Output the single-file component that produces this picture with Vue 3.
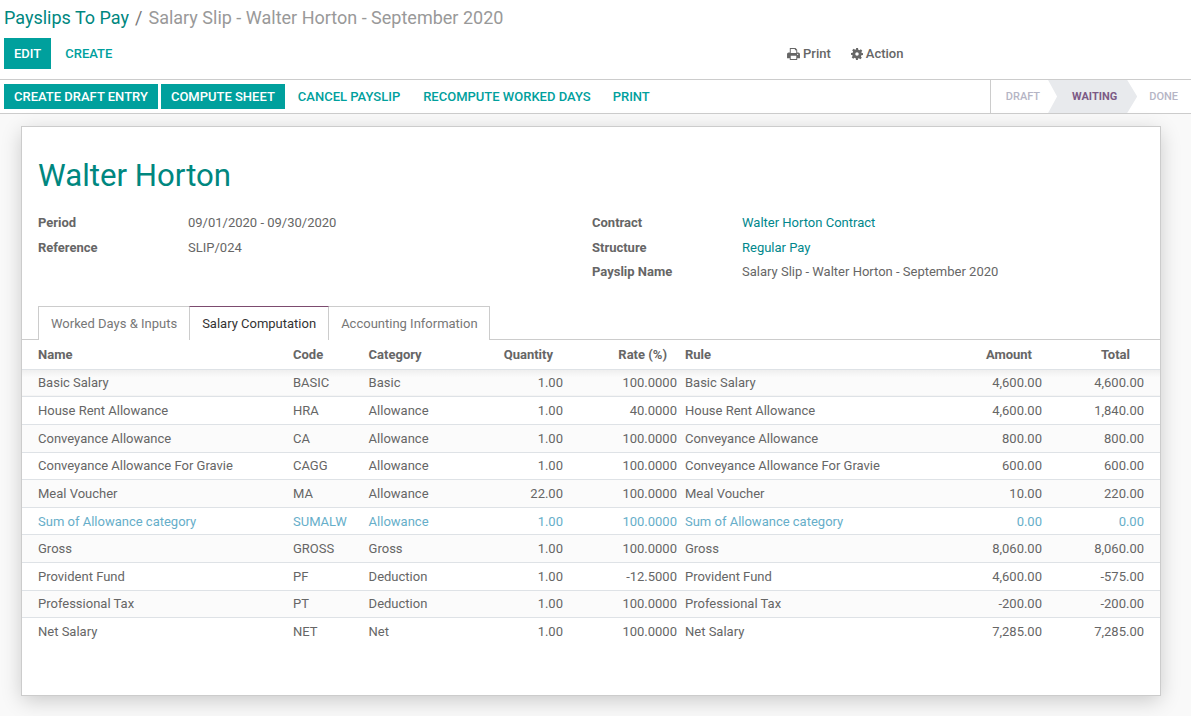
<script setup>
const rows = [
  { name: 'Basic Salary', code: 'BASIC', category: 'Basic', qty: '1.00', rate: '100.0000', amount: '4,600.00', total: '4,600.00' },
  { name: 'House Rent Allowance', code: 'HRA', category: 'Allowance', qty: '1.00', rate: '40.0000', amount: '4,600.00', total: '1,840.00' },
  { name: 'Conveyance Allowance', code: 'CA', category: 'Allowance', qty: '1.00', rate: '100.0000', amount: '800.00', total: '800.00' },
  { name: 'Conveyance Allowance For Gravie', code: 'CAGG', category: 'Allowance', qty: '1.00', rate: '100.0000', amount: '600.00', total: '600.00' },
  { name: 'Meal Voucher', code: 'MA', category: 'Allowance', qty: '22.00', rate: '100.0000', amount: '10.00', total: '220.00' },
  { name: 'Sum of Allowance category', code: 'SUMALW', category: 'Allowance', qty: '1.00', rate: '100.0000', amount: '0.00', total: '0.00', muted: true },
  { name: 'Gross', code: 'GROSS', category: 'Gross', qty: '1.00', rate: '100.0000', amount: '8,060.00', total: '8,060.00' },
  { name: 'Provident Fund', code: 'PF', category: 'Deduction', qty: '1.00', rate: '-12.5000', amount: '4,600.00', total: '-575.00' },
  { name: 'Professional Tax', code: 'PT', category: 'Deduction', qty: '1.00', rate: '100.0000', amount: '-200.00', total: '-200.00' },
  { name: 'Net Salary', code: 'NET', category: 'Net', qty: '1.00', rate: '100.0000', amount: '7,285.00', total: '7,285.00' }
]
</script>

<template>
  <div class="page">
    <header class="panel">
      <div class="crumbs">
        <a class="crumb-link">Payslips To Pay</a>
        <span class="slash">/</span>
        <span class="crumb-now">Salary Slip - Walter Horton - September 2020</span>
      </div>
      <div class="panel-row">
        <div class="btns">
          <button class="btn primary edit">EDIT</button>
          <button class="btn link create">CREATE</button>
        </div>
        <div class="sidebar">
          <span class="side-item">
            <svg class="ico" viewBox="0 0 14 13" width="13" height="12">
              <path fill="#666" fill-rule="evenodd" d="M3 0h6.200L11 1.800V5h1.200c1 0 1.800.8 1.800 1.800V11h-3v2H3v-2H0V6.800C0 5.800.8 5 1.800 5H3zM4 1v4.500h6V2.500H8.500V1zM4 8.500V12h6V8.500zM11.500 6.200a.7.7 0 1 0 0 1.400.7.7 0 0 0 0-1.400z" />
            </svg>
            Print
          </span>
          <span class="side-item">
            <svg class="ico" viewBox="0 0 24 24" width="12" height="12">
              <path fill="#666" fill-rule="evenodd" d="M10 0h4l.6 3.300 2.300 1 2.800-1.900 2.900 2.900-1.900 2.800 1 2.300L24 10v4l-3.300.6-1 2.300 1.900 2.800-2.900 2.900-2.800-1.900-2.300 1L14 24h-4l-.6-3.300-2.300-1-2.800 1.900-2.900-2.900 1.900-2.800-1-2.300L0 14v-4l3.300-.6 1-2.300-1.900-2.800 2.900-2.900 2.800 1.900 2.300-1zM12 8.500a3.500 3.500 0 1 0 0 7 3.500 3.500 0 0 0 0-7z" />
            </svg>
            Action
          </span>
        </div>
      </div>
    </header>

    <div class="statusbar">
      <div class="actions">
        <button class="btn primary">CREATE DRAFT ENTRY</button>
        <button class="btn primary">COMPUTE SHEET</button>
        <button class="btn link">CANCEL PAYSLIP</button>
        <button class="btn link">RECOMPUTE WORKED DAYS</button>
        <button class="btn link last-link">PRINT</button>
      </div>
      <div class="steps">
        <span class="step first">DRAFT</span>
        <span class="step current">WAITING</span>
        <span class="step last">DONE</span>
      </div>
    </div>

    <main class="sheet">
      <h1 class="employee">Walter Horton</h1>
      <div class="info">
        <dl class="info-col">
          <div class="info-row"><dt>Period</dt><dd>09/01/2020 - 09/30/2020</dd></div>
          <div class="info-row"><dt>Reference</dt><dd>SLIP/024</dd></div>
        </dl>
        <dl class="info-col">
          <div class="info-row"><dt>Contract</dt><dd class="teal">Walter Horton Contract</dd></div>
          <div class="info-row"><dt>Structure</dt><dd class="teal">Regular Pay</dd></div>
          <div class="info-row"><dt>Payslip Name</dt><dd>Salary Slip - Walter Horton - September 2020</dd></div>
        </dl>
      </div>

      <div class="tabs">
        <span class="tab">Worked Days &amp; Inputs</span>
        <span class="tab active">Salary Computation</span>
        <span class="tab tab-last">Accounting Information</span>
      </div>

      <table class="lines">
        <thead>
          <tr>
            <th class="c-name">Name</th>
            <th class="c-code">Code</th>
            <th class="c-cat">Category</th>
            <th class="c-qty num">Quantity</th>
            <th class="c-rate num">Rate (%)</th>
            <th class="c-rule">Rule</th>
            <th class="c-amt num">Amount</th>
            <th class="c-total num">Total</th>
          </tr>
        </thead>
        <tbody>
          <tr v-for="row in rows" :key="row.code" :class="{ muted: row.muted }">
            <td class="c-name">{{ row.name }}</td>
            <td class="c-code">{{ row.code }}</td>
            <td class="c-cat">{{ row.category }}</td>
            <td class="c-qty num">{{ row.qty }}</td>
            <td class="c-rate num">{{ row.rate }}</td>
            <td class="c-rule">{{ row.name }}</td>
            <td class="c-amt num">{{ row.amount }}</td>
            <td class="c-total num">{{ row.total }}</td>
          </tr>
        </tbody>
      </table>
    </main>
  </div>
</template>

<style scoped>
.page {
  height: 716px;
  overflow: hidden;
  background: #f9f9f9;
  color: #666;
  font-family: Roboto, "Liberation Sans", sans-serif;
  font-size: 13px;
}
.panel {
  height: 79px;
  background: #fff;
  border-bottom: 1px solid #ccc;
}
.crumbs {
  display: flex;
  align-items: center;
  height: 34px;
  padding-left: 4px;
  font-size: 18px;
}
.crumb-link { color: #00877f; }
.slash { margin: 0 6px; color: #777; }
.crumb-now { color: #999; }
.panel-row { display: flex; padding-top: 4px; }
.btns { display: flex; width: 787px; }
.btn {
  border: 0;
  padding: 0 10px;
  font: 500 13px Roboto, "Liberation Sans", sans-serif;
  white-space: nowrap;
}
.primary { background: #00a09d; color: #fff; }
.link { background: transparent; color: #00a09d; }
.edit { margin-left: 4px; height: 31px; }
.create { margin-left: 4px; height: 31px; }
.sidebar { display: flex; gap: 20px; height: 31px; align-items: center; font-weight: 500; }
.side-item { display: flex; align-items: center; gap: 3px; }
.statusbar {
  display: flex;
  justify-content: space-between;
  height: 33px;
  background: #fff;
  border-bottom: 1px solid #ccc;
}
.actions { display: flex; align-items: center; padding-left: 4px; gap: 3px; }
.actions .btn { height: 25px; }
.actions .last-link { margin-left: -1px; }
.steps { display: flex; height: 33px; border-left: 1px solid #ccc; font-size: 11px; font-weight: 500; }
.step { display: flex; align-items: center; color: #b5b5c5; }
.first { padding: 0 8px 0 15px; }
.current {
  position: relative;
  z-index: 1;
  padding: 0 20px 0 24px;
  margin-right: -10px;
  background: #e8eaed;
  color: #7c5a85;
  font-weight: 700;
  clip-path: polygon(0 0, calc(100% - 10px) 0, 100% 50%, calc(100% - 10px) 100%, 0 100%, 9px 50%);
}
.last { padding: 0 13px 0 22px; }
.sheet {
  box-sizing: border-box;
  width: 1140px;
  height: 570px;
  margin: 12px 0 0 21px;
  background: #fff;
  border: 1px solid #ccc;
  box-shadow: 0 5px 20px -1px rgba(0, 0, 0, 0.2);
}
.employee {
  margin: 27px 0 0 16px;
  height: 44px;
  font-size: 31.2px;
  line-height: 44px;
  font-weight: 400;
  color: #00877f;
}
.info { display: flex; margin-top: 12.4px; padding-left: 16px; height: 95.6px; }
.info-col { margin: 0; width: 554px; }
.info-row { display: flex; height: 24.5px; align-items: center; }
.info-row dt { width: 150px; font-weight: 700; color: #666; }
.info-row dd { margin: 0; }
.teal { color: #00878c; }
.tabs {
  display: flex;
  height: 33px;
  padding-left: 16px;
  border-bottom: 1px solid #ccc;
}
.tab {
  box-sizing: border-box;
  height: 34px;
  padding: 0 12px;
  line-height: 34px;
  background: #fff;
  border: 1px solid #ccc;
  border-bottom: 0;
  margin-right: -1px;
  color: #777;
}
.tab-last { padding-right: 11px; }
.tab.active {
  color: #333;
  border-top: 1px solid #7c4b6f;
  position: relative;
  z-index: 1;
}
.lines { width: 1138px; border-collapse: collapse; table-layout: fixed; }
.lines th, .lines td { box-sizing: border-box; padding: 0; text-align: left; white-space: nowrap; }
.lines th { height: 29.2px; font-weight: 700; border-bottom: 1px solid #dee2e6; }
.lines td { height: 27.64px; border-top: 1px solid #dee2e6; }
.lines tbody tr:first-child td {
  border-top: 0;
  background: linear-gradient(#eeeeee, #fbfbfb 8px);
}
.lines tbody tr:nth-child(odd) { background: #fbfbfb; }
.lines tbody tr:last-child { background: #fff; }
.muted td { color: #66aec9; }
.c-name { width: 271px; padding-left: 16px !important; }
.c-code { width: 75.6px; }
.c-cat { width: 87.4px; }
.c-qty { width: 107px; }
.c-rate { width: 114px; }
.c-rule { width: 257px; padding-left: 8px !important; }
.c-amt { width: 108px; }
.c-total { width: 118px; }
.num { text-align: right !important; }
td.c-total { padding-right: 16px; }
th.num { padding-right: 10px; }
th.c-total { padding-right: 30px; }
</style>
